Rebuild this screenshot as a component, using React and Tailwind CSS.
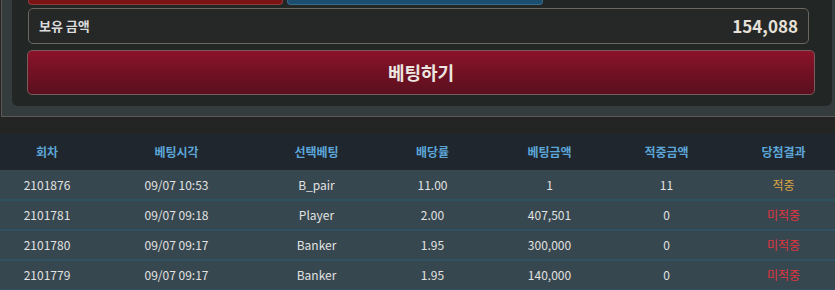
import React from 'react';

const rows = [
    { round: '2101876', time: '09/07 10:53', pick: 'B_pair', odds: '11.00', amount: '1', win: '11', result: '적중', hit: true },
    { round: '2101781', time: '09/07 09:18', pick: 'Player', odds: '2.00', amount: '407,501', win: '0', result: '미적중', hit: false },
    { round: '2101780', time: '09/07 09:17', pick: 'Banker', odds: '1.95', amount: '300,000', win: '0', result: '미적중', hit: false },
    { round: '2101779', time: '09/07 09:17', pick: 'Banker', odds: '1.95', amount: '140,000', win: '0', result: '미적중', hit: false },
];

const headers = ['회차', '베팅시각', '선택베팅', '배당률', '베팅금액', '적중금액', '당첨결과'];
const widths = ['w-[94px]', 'w-[165px]', 'w-[115px]', 'w-[117px]', 'w-[117px]', 'w-[117px]', 'w-[117px]'];

function App() {
    return (
        <div
            className="w-[835px] h-[290px] overflow-hidden bg-[#232525]"
            style={{ fontFamily: '"Noto Sans CJK KR", "Noto Sans", sans-serif' }}
        >
            {/* Bet panel */}
            <div className="ml-[1px] w-[845px] bg-[#343c3e] border-l border-b border-[#5e5955] pl-[10px] pb-[10px]">
                <div className="w-[820px] bg-[#222726] rounded-b-[6px] pl-[15px] pr-[17px] pb-[11px]">
                    <div className="flex gap-[4px] h-[5px] ml-[1px]">
                        <div className="w-[255px] bg-[#7a1414] border-x border-b border-[#8a3a3a] rounded-b-[4px]" />
                        <div className="w-[256px] bg-[#1b4d6e] border-x border-b border-[#3a6a8a] rounded-b-[4px]" />
                    </div>

                    {/* Balance */}
                    <div className="mt-[3px] ml-[1px] mr-[6px] h-[36px] flex items-center justify-between px-[10px] bg-[#262828] border border-[#6b6760] rounded-[5px]">
                        <span className="text-[13px] font-bold text-[#dcdcdc]">보유 금액</span>
                        <span className="text-[17px] font-bold text-[#e6e2da]">154,088</span>
                    </div>

                    {/* Bet button */}
                    <button className="mt-[6px] w-full h-[45px] flex items-center justify-center rounded-[5px] border border-[#7a5a5a] bg-gradient-to-b from-[#8b1229] to-[#5a0f1e] text-[18px] font-bold text-[#ece6e0]">
                        베팅하기
                    </button>
                </div>
            </div>

            {/* History */}
            <table className="mt-[17px] w-[842px] table-fixed border-collapse text-[12px]">
                <thead>
                    <tr className="h-[36px] bg-[#1f262d]">
                        {headers.map((h, i) => (
                            <th key={h} className={`${widths[i]} font-bold text-[#5ca6d9] text-center`}>{h}</th>
                        ))}
                    </tr>
                </thead>
                <tbody>
                    {rows.map((r) => (
                        <tr key={r.round} className="h-[30px] bg-[#37474f] border-b-2 border-[#2f5262] text-[#e2e2e2] text-center">
                            <td>{r.round}</td>
                            <td>{r.time}</td>
                            <td>{r.pick}</td>
                            <td>{r.odds}</td>
                            <td>{r.amount}</td>
                            <td>{r.win}</td>
                            <td className={r.hit ? 'text-[#d9a441]' : 'text-[#e0343e]'}>{r.result}</td>
                        </tr>
                    ))}
                </tbody>
            </table>
        </div>
    );
}

export default App;
